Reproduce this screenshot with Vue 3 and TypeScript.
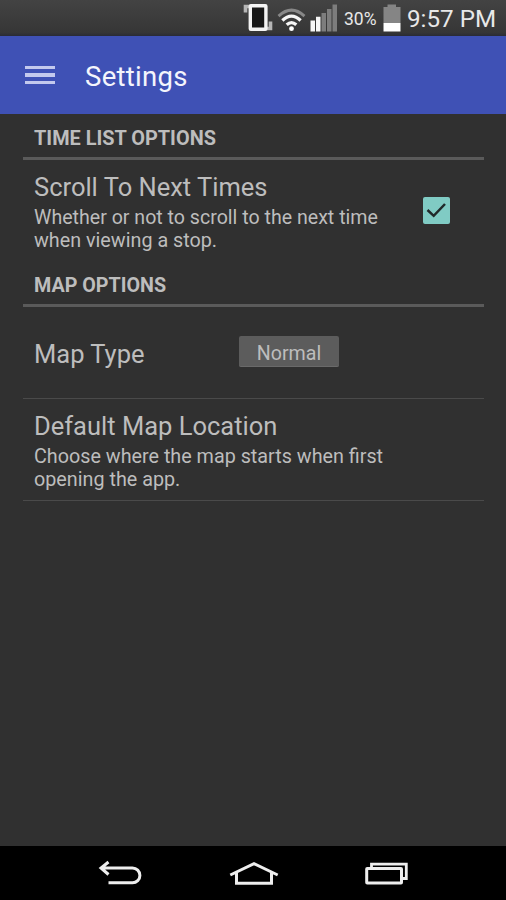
<script setup lang="ts">
import { ref } from 'vue'

const scrollToNext = ref(true)
const mapType = ref('Normal')
</script>

<template>
  <div class="screen">
    <header class="status">
      <svg class="s-vibrate" width="30" height="34" viewBox="0 0 30 34">
        <path d="M2.500 12.500V6.500H6M27.500 21.500V28.500H24" fill="none" stroke="#b5b5b5" stroke-width="3.600" />
        <rect x="7.300" y="5.800" width="15.600" height="23.400" rx="0.500" fill="#181818" stroke="#f4f4f4" stroke-width="3.400" />
      </svg>
      <svg class="s-wifi" width="29" height="25" viewBox="0 0 30 26">
        <path d="M1.500 9.500Q15-3 28.500 9.500" fill="none" stroke="#888" stroke-width="3" />
        <path d="M5.500 14Q15 5 24.500 14M10 18.500Q15 14 20 18.500" fill="none" stroke="#f6f6f6" stroke-width="3.400" />
        <circle cx="15" cy="22.500" r="2.500" fill="#fff" />
      </svg>
      <svg class="s-signal" width="28" height="28" viewBox="0 0 28 28">
        <path d="M0.500 16.500h4.500v11h-4.500zM6 12.800h4.500v14.700H6z" fill="#f6f6f6" />
        <path d="M11.500 9h4.500v18.500h-4.500zM17 5h4.500v22.500H17zM22.500 0.500h4.500v27h-4.500z" fill="#7d7d7d" />
      </svg>
      <span class="percent">30%</span>
      <svg class="s-battery" width="18" height="28" viewBox="0 0 18 28">
        <path d="M4.500 0.500h8.500v2.500H17.500v16H0.500V3h4z" fill="#858585" />
        <path d="M0.500 19h17v8.500h-17z" fill="#fff" />
      </svg>
      <span class="clock">9:57 PM</span>
    </header>

    <div class="appbar">
      <button class="menu" aria-label="Menu"><i></i><i></i><i></i></button>
      <h1>Settings</h1>
    </div>

    <main>
      <h2>TIME LIST OPTIONS</h2>
      <section class="row row-scroll">
        <div>
          <h3>Scroll To Next Times</h3>
          <p>
            <span class="hint-wide">Whether or not to scroll to the next time</span><br />
            <span>when viewing a stop.</span>
          </p>
        </div>
        <button class="check" role="checkbox" :aria-checked="scrollToNext" @click="scrollToNext = !scrollToNext">
          <svg v-if="scrollToNext" width="27" height="28" viewBox="0 0 27 28">
            <path d="M4.500 13L10.700 18.800L22 7" fill="none" stroke="#20292a" stroke-width="2.500" />
          </svg>
        </button>
      </section>

      <h2 class="h-map">MAP OPTIONS</h2>
      <section class="row row-type">
        <h3 class="t-type">Map Type</h3>
        <button class="spinner">{{ mapType }}</button>
      </section>
      <section class="row row-location">
        <h3>Default Map Location</h3>
        <p>
          <span>Choose where the map starts when first</span><br />
          <span>opening the app.</span>
        </p>
      </section>
    </main>

    <nav class="nav">
      <svg width="46" height="28" viewBox="0 0 46 28">
        <path d="M10.500 2L3 8L10.500 14.500M3 8H34.500A7.400 7.400 0 0 1 34.500 22.800H10.500" fill="none" stroke="#eee" stroke-width="3" />
      </svg>
      <svg width="50" height="28" viewBox="0 0 50 28">
        <path d="M1.300 15L25 3.700L48.700 15M7.500 12.500V23.300H42.500V12.500" fill="none" stroke="#eee" stroke-width="3" />
      </svg>
      <svg width="46" height="28" viewBox="0 0 46 28">
        <path d="M7.500 8V4.200H42.300V18.500H38" fill="none" stroke="#eee" stroke-width="2.800" />
        <rect x="2.700" y="8.500" width="34.800" height="14.500" rx="0.500" fill="none" stroke="#eee" stroke-width="3" />
      </svg>
    </nav>
  </div>
</template>

<style>
body {
  margin: 0;
  background: #303030;
}
</style>

<style scoped>
.screen {
  width: 506px;
  height: 900px;
  display: flex;
  flex-direction: column;
  overflow: hidden;
  background: #303030;
  color: #bdbdbd;
  font-family: Roboto, 'Liberation Sans', sans-serif;
}
h1, h2, h3, p {
  margin: 0;
  font-weight: 400;
  white-space: nowrap;
}
button {
  border: 0;
  padding: 0;
  font: inherit;
}
svg {
  display: block;
  flex: none;
}
.status {
  height: 36px;
  box-sizing: border-box;
  flex: none;
  display: flex;
  align-items: flex-start;
  padding-left: 243px;
  background: linear-gradient(#434343, #363636 90%, #292b35);
  color: #e8e8e8;
}
.s-wifi { margin: 7px 0 0 4px; }
.s-signal { margin: 4px 0 0 4px; }
.s-battery { margin: 4px 0 0 4px; }
.percent {
  width: 35px;
  margin-left: 6px;
  font-size: 17.500px;
  line-height: 38px;
}
.clock {
  margin-left: 6px;
  font-size: 24.200px;
  line-height: 38px;
  white-space: nowrap;
}
.appbar {
  height: 78px;
  flex: none;
  display: flex;
  align-items: center;
  padding-left: 25px;
  background: #3f51b5;
}
.menu {
  width: 30px;
  display: flex;
  flex-direction: column;
  gap: 4px;
  background: none;
}
.menu i {
  height: 3.300px;
  background: #c3c9ee;
}
h1 {
  margin-left: 30px;
  padding-top: 3px;
  color: #f4f5fc;
  font-size: 27.500px;
  line-height: 32px;
  letter-spacing: 0.300px;
}
main {
  flex: 1;
  padding: 0 22px 0 23px;
}
h2 {
  height: 46px;
  box-sizing: border-box;
  padding: 13px 0 0 11px;
  border-bottom: 3px solid #5a5a5a;
  font-size: 19.900px;
  line-height: 24px;
  font-weight: 700;
}
.h-map {
  font-size: 19.700px;
}
.row {
  box-sizing: border-box;
  padding-left: 11px;
}
h3 {
  font-size: 25.500px;
  line-height: 30px;
}
p {
  margin-top: 4px;
  font-size: 19.750px;
  line-height: 23px;
}
.hint-wide {
  font-size: 19.600px;
}
.row-scroll {
  height: 101px;
  display: flex;
  justify-content: space-between;
  padding-top: 12px;
  padding-right: 34px;
}
.check {
  width: 27px;
  height: 27px;
  margin-top: 25px;
  border-radius: 2px;
  background: #80cbc4;
}
.row-type {
  height: 92px;
  display: flex;
  align-items: center;
  border-bottom: 1px solid #4a4a4a;
}
.t-type {
  width: 205px;
  padding-top: 3px;
}
.spinner {
  width: 100px;
  height: 31px;
  margin-top: -2px;
  border-radius: 2px;
  background: #5c5c5c;
  border-bottom: 1px solid #6a6a6a;
  color: #bdbdbd;
  font-size: 19.600px;
  line-height: 35px;
}
.row-location {
  height: 102px;
  padding-top: 12px;
  border-bottom: 1px solid #4a4a4a;
}
.nav {
  height: 54px;
  flex: none;
  box-sizing: border-box;
  display: flex;
  align-items: center;
  gap: 85px;
  padding: 1px 0 0 98px;
  background: #000;
}
</style>
